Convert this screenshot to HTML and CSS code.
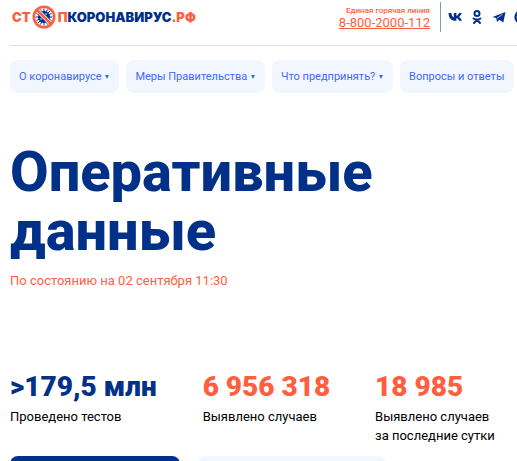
FILE: index.html
```html
<!doctype html>
<html lang="ru">

<head>
    <meta charset="utf-8">
    <meta name="viewport" content="width=device-width, initial-scale=1">
    <title>Стопкоронавирус.рф</title>
    <link rel="stylesheet" href="styles.css">
</head>

<body>
    <header class="header">
        <a class="logo" href="#" aria-label="Стопкоронавирус.рф">
            <span class="logo-accent">СТ</span>
            <svg class="logo-icon" viewBox="0 0 24 24" aria-hidden="true">
                <circle cx="12" cy="12" r="6" fill="#003087" />
                <path d="M12 3.500v17M3.500 12h17M6 6l12 12M18 6L6 18M8.500 4.500l7 15M15.500 4.500l-7 15M4.500 8.500l15 7M4.500 15.500l15-7" stroke="#003087" stroke-width="1" />
                <circle cx="14" cy="9" r=".8" fill="#fff" />
                <circle cx="9" cy="14" r=".8" fill="#fff" />
                <path d="M5 5l14 14" stroke="#fff" stroke-width="4" />
                <path d="M4.500 4.500l15 15" stroke="#ff5f40" stroke-width="2.600" />
                <circle cx="12" cy="12" r="10.200" fill="none" stroke="#ff5f40" stroke-width="2.600" />
            </svg>
            <span class="logo-accent">П</span><span>КОРОНАВИРУС</span><span class="logo-accent">.РФ</span>
        </a>
        <div class="hotline">
            <span class="hotline-title">Единая горячая линия</span>
            <a class="hotline-phone" href="tel:88002000112">8-800-2000-112</a>
        </div>
        <div class="social">
            <a href="#" aria-label="ВКонтакте">
                <svg viewBox="0 0 14 16"><path d="M.5 4h2.800c.3 2.300 1.300 4 2.500 4.400V4h2.600v2.900C9.700 6.500 10.500 5.400 11 4h2.600c-.4 1.800-1.500 3.100-2.700 3.900 1.400.7 2.500 2 3 3.900H11c-.4-1.300-1.300-2.300-2.600-2.700v2.700H7.500C3.300 11.800.7 9 .5 4z" fill="currentColor" /></svg>
            </a>
            <a href="#" aria-label="Одноклассники">
                <svg viewBox="0 0 14 16"><g fill="none" stroke="currentColor" stroke-width="2" stroke-linecap="round"><circle cx="7" cy="4.500" r="2.500" /><path d="M3.500 9.500c2.200 1.300 4.800 1.300 7 0M7 10.800L4 14M7 10.800L10 14" /></g></svg>
            </a>
            <a href="#" aria-label="Telegram">
                <svg viewBox="0 0 14 16"><path d="M.5 7.900L13.500 3l-2.200 10.500-4-2.800L5 12.900l-.8-3.800z" fill="currentColor" /><path d="M5 9.300l5.500-4" stroke="#fff" stroke-width=".7" /></svg>
            </a>
            <a href="#" aria-label="Viber">
                <svg viewBox="0 0 14 16"><circle cx="7" cy="8" r="5.500" fill="none" stroke="currentColor" stroke-width="2.400" /></svg>
            </a>
        </div>
    </header>

    <nav class="menu">
        <a href="#">О коронавирусе <span class="arrow"></span></a>
        <a href="#">Меры Правительства <span class="arrow"></span></a>
        <a href="#">Что предпринять? <span class="arrow"></span></a>
        <a href="#">Вопросы и ответы</a>
    </nav>

    <main class="content">
        <h1>Оперативные данные</h1>
        <p class="date">По состоянию на 02 сентября 11:30</p>

        <div class="stats">
            <div class="stat stat-tests">
                <div class="stat-value">&gt;179,5 млн</div>
                <div class="stat-label">Проведено тестов</div>
            </div>
            <div class="stat">
                <div class="stat-value">6 956 318</div>
                <div class="stat-label">Выявлено случаев</div>
            </div>
            <div class="stat">
                <div class="stat-value">18 985</div>
                <div class="stat-label">Выявлено случаев<br>за последние сутки</div>
            </div>
        </div>

        <div class="tabs">
            <button class="tab tab-active" type="button" aria-label="Россия"></button>
            <button class="tab" type="button" aria-label="Регионы"></button>
        </div>
    </main>
</body>

</html>
```

FILE: styles.css
```css
* {
    box-sizing: border-box;
}

html {
    overflow: hidden;
}

body {
    margin: 0;
    padding-left: 10px;
    background: #fff;
    color: #000;
    font-family: Roboto, "Liberation Sans", sans-serif;
    font-size: 13px;
}

a {
    color: inherit;
    text-decoration: none;
}

.header {
    display: flex;
    height: 46px;
    padding-top: 2px;
    border-bottom: 1px solid #e0e0e0;
    color: #003087;
    overflow: hidden;
}

.logo {
    display: flex;
    align-items: center;
    height: 30px;
    padding-left: 2px;
    font-family: Inter, sans-serif;
    font-size: 13px;
    font-weight: 900;
}

.logo-icon {
    width: 24px;
    height: 24px;
    margin: 0 2px 0 1px;
}

.logo-accent {
    color: #ff5f40;
}

.hotline {
    display: flex;
    flex-direction: column;
    align-items: flex-end;
    height: 30px;
    margin-left: auto;
    padding-top: 4px;
    padding-right: 10px;
    border-right: 1px solid #7f97c3;
    color: #ff5f40;
    white-space: nowrap;
}

.hotline-title {
    font-size: 8px;
    font-weight: 500;
    line-height: 9px;
}

.hotline-phone {
    font-size: 13px;
    line-height: 15px;
    text-decoration: underline;
}

.social {
    display: flex;
    gap: 8px;
    height: 30px;
    align-items: center;
    padding-left: 7px;
    margin-right: -11px;
}

.social svg {
    display: block;
    width: 14px;
    height: 16px;
}

.menu {
    display: flex;
    gap: 7px;
    padding-top: 14px;
}

.menu a {
    padding: 1px 10px 0 9px;
    border-radius: 8px;
    background: #f2f6ff;
    color: #3d68ff;
    font-size: 11px;
    line-height: 32px;
    white-space: nowrap;
}

.arrow {
    display: inline-block;
    margin-left: 1px;
    border: 2px solid transparent;
    border-top: 4px solid #3d68ff;
    border-bottom: 0;
    vertical-align: 1px;
}

h1 {
    margin: 50px 0 0;
    color: #003087;
    font-size: 56px;
    font-weight: 800;
    line-height: 59px;
}

.date {
    margin: 10px 0 0;
    color: #ff5f40;
    line-height: 19px;
}

.stats {
    display: grid;
    grid-template-columns: 38fr 34fr 28fr;
    margin-top: 80px;
}

.stat-value {
    color: #ff5f40;
    font-size: 28px;
    font-weight: 900;
    line-height: 33px;
    white-space: nowrap;
}

.stat-tests .stat-value {
    color: #003087;
}

.stat-label {
    margin-top: 4px;
    line-height: 19px;
}

.tabs {
    display: flex;
    gap: 18px;
    margin-top: 11px;
}

.tab {
    flex: 0 0 37%;
    height: 40px;
    border: 0;
    border-radius: 8px;
    background: #f2f6ff;
}

.tab-active {
    flex-basis: 170px;
    background: #003087;
}
```
